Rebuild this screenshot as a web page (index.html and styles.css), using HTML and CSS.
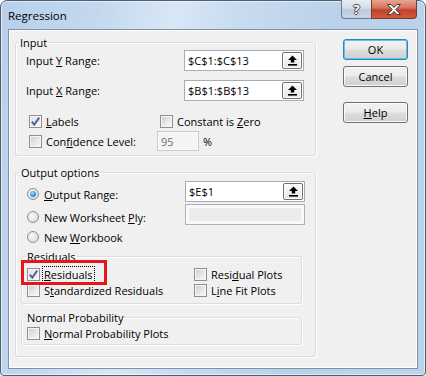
FILE: index.html
```html
<!DOCTYPE html>
<html lang="en">
<head>
<meta charset="UTF-8">
<title>Regression</title>
<link rel="stylesheet" href="styles.css">
</head>
<body>
<div class="window">
<div class="titlebar">
<span class="title">Regression</span>
<div class="caption">
<span class="cap-btn help">?</span>
<span class="cap-btn close">
<svg width="16" height="11" viewBox="0 0 16 11"><path d="M1.5 0.5h3.5l3 3 3-3h3.5l-4.7 5 4.7 5h-3.5l-3-3-3 3h-3.5l4.7-5z" fill="#fff" stroke="#3a3a3a" stroke-width="1" stroke-linejoin="round"/></svg>
</span>
</div>
</div>

<div class="client">
<div class="groups">

<fieldset class="group input-group">
<legend>Input</legend>
<div class="range-row">
<span class="range-label">Input <u>Y</u> Range:</span>
<div class="refedit"><span class="val">$C$1:$C$13</span><span class="ref-btn"><svg width="11" height="11" viewBox="0 0 11 11"><path d="M5.5 0.5L10 5H7.2V7.5H3.8V5H1z" fill="#000"/><rect x="1" y="9" width="9" height="1.6" fill="#000"/></svg></span></div>
</div>
<div class="range-row second">
<span class="range-label">Input <u>X</u> Range:</span>
<div class="refedit"><span class="val">$B$1:$B$13</span><span class="ref-btn"><svg width="11" height="11" viewBox="0 0 11 11"><path d="M5.5 0.5L10 5H7.2V7.5H3.8V5H1z" fill="#000"/><rect x="1" y="9" width="9" height="1.6" fill="#000"/></svg></span></div>
</div>
<div class="opt-grid">
<label class="chk"><span class="box on"><svg width="11" height="11" viewBox="0 0 11 11"><path d="M1.8 5.6L4.3 8.6L9.2 1.6" fill="none" stroke="#4f6596" stroke-width="2"/></svg></span><span><u>L</u>abels</span></label>
<label class="chk zero"><span class="box"></span><span>Constant is <u>Z</u>ero</span></label>
<label class="chk"><span class="box"></span><span>Con<u>f</u>idence Level:</span></label>
<div class="conf"><span class="edit disabled">95</span><span class="pct">%</span></div>
</div>
</fieldset>

<fieldset class="group output-group">
<legend>Output options</legend>
<div class="range-row out-first">
<label class="rad"><span class="dot on"></span><span><u>O</u>utput Range:</span></label>
<div class="refedit"><span class="val">$E$1</span><span class="ref-btn"><svg width="11" height="11" viewBox="0 0 11 11"><path d="M5.5 0.5L10 5H7.2V7.5H3.8V5H1z" fill="#000"/><rect x="1" y="9" width="9" height="1.6" fill="#000"/></svg></span></div>
</div>
<div class="range-row out-second">
<label class="rad"><span class="dot"></span><span>New Worksheet <u>P</u>ly:</span></label>
<div class="edit blank"></div>
</div>
<div class="radio-row">
<label class="rad"><span class="dot"></span><span>New <u>W</u>orkbook</span></label>
</div>

<fieldset class="group sub residuals">
<legend>Residuals</legend>
<div class="res-grid">
<label class="chk marked"><span class="box on"><svg width="11" height="11" viewBox="0 0 11 11"><path d="M1.8 5.6L4.3 8.6L9.2 1.6" fill="none" stroke="#4f6596" stroke-width="2"/></svg></span><span class="focus"><u>R</u>esiduals</span><span class="highlight"></span></label>
<label class="chk"><span class="box"></span><span>Resi<u>d</u>ual Plots</span></label>
<label class="chk"><span class="box"></span><span>S<u>t</u>andardized Residuals</span></label>
<label class="chk"><span class="box"></span><span>L<u>i</u>ne Fit Plots</span></label>
</div>
</fieldset>

<fieldset class="group sub normal">
<legend>Normal Probability</legend>
<div class="res-grid">
<label class="chk"><span class="box"></span><span><u>N</u>ormal Probability Plots</span></label>
</div>
</fieldset>
</fieldset>

</div>

<div class="buttons">
<button class="btn default">OK</button>
<button class="btn cancel">Cancel</button>
<button class="btn help-btn"><u>H</u>elp</button>
</div>
</div>
</div>
</body>
</html>
```

FILE: styles.css
```css
body {
margin: 0;
font-family: 'Open Sans', 'Noto Sans', sans-serif;
font-size: 11px;
color: #000;
background: #fff;
}
u {
text-decoration: underline;
text-underline-offset: 1px;
}
.window {
width: 426px;
height: 376px;
box-sizing: border-box;
border: 1px solid #4f5f72;
border-radius: 7px 7px 4px 4px;
padding: 0 7px 6px 7px;
background: linear-gradient(100deg, #b8d0ea 0%, #c3d8ee 20%, #d9e7f6 36%, #c9dcf0 48%, #b9d1ea 70%, #bcd3eb 100%);
box-shadow: inset 0 0 0 1px rgba(255,255,255,0.55);
}
.titlebar {
height: 28px;
display: flex;
justify-content: space-between;
align-items: flex-start;
}
.title {
font-size: 11.5px;
line-height: 15px;
padding-top: 7px;
}
.caption {
display: flex;
margin-top: -1px;
margin-right: 1px;
}
.cap-btn {
height: 19px;
display: flex;
align-items: center;
justify-content: center;
box-sizing: border-box;
border: 1px solid #6a7a8e;
border-top: none;
}
.help {
width: 30px;
border-radius: 0 0 0 4px;
background: linear-gradient(#e6ecf3 0%, #d3dde9 45%, #bccadb 55%, #c9d6e5 100%);
color: #fff;
font-weight: bold;
font-size: 13px;
text-shadow: 1px 0 0 #444, -1px 0 0 #444, 0 1px 0 #444, 0 -1px 0 #444;
border-right: none;
}
.close {
width: 46px;
border-radius: 0 0 4px 0;
background: linear-gradient(#e8a594 0%, #d6715b 45%, #c2412a 55%, #d35a3e 100%);
border-color: #7a3a30;
}
.client {
height: 340px;
box-sizing: border-box;
border: 1px solid #7d92aa;
background: #f0f0f0;
box-shadow: inset 0 0 0 1px #fff;
display: flex;
padding: 5px 0 0 6px;
}
.groups {
width: 301px;
}
.group {
margin: 0;
padding: 0;
min-width: 0;
border: 1px solid #d5dfe5;
border-radius: 3px;
box-shadow: inset 1px 1px 0 #fff, 1px 1px 0 #fff;
}
.group legend {
padding: 0 1px;
margin-left: -1px;
line-height: 15px;
}
.input-group {
padding: 0 11px 4px 10px;
}
.input-group legend {
margin-left: -7px;
}
.range-row {
display: flex;
justify-content: space-between;
align-items: center;
height: 21px;
}
.range-row.second {
margin-top: 9px;
}
.refedit, .edit {
width: 120px;
height: 21px;
box-sizing: border-box;
border: 1px solid #a8acb3;
background: #fff;
display: flex;
align-items: center;
justify-content: space-between;
}
.refedit .val {
padding-left: 3px;
}
.ref-btn {
width: 20px;
height: 17px;
box-sizing: border-box;
margin-right: 1px;
border: 1px solid #6f6f6f;
border-radius: 2px;
background: linear-gradient(#fdfdfd, #e4e4e4);
box-shadow: inset 0 0 0 1px #fff;
display: flex;
align-items: center;
justify-content: center;
}
.opt-grid {
display: grid;
grid-template-columns: 128px auto;
grid-auto-rows: 20px;
margin-top: 10px;
padding-left: 3px;
}
.chk, .rad {
display: flex;
align-items: center;
gap: 4px;
white-space: nowrap;
}
.box {
width: 13px;
height: 13px;
box-sizing: border-box;
border: 1px solid #8e8f8f;
background: linear-gradient(135deg, #c9ccd1 0%, #e9eaeb 60%, #f8f8f8 100%);
box-shadow: inset 0 0 0 1px #f6f6f6;
display: flex;
align-items: center;
justify-content: center;
flex: none;
}
.box.on {
background: linear-gradient(135deg, #dfe2e6 0%, #f4f4f5 100%);
}
.zero {
padding-left: 3px;
}
.conf {
display: flex;
align-items: center;
gap: 4px;
}
.edit.disabled {
width: 42px;
height: 20px;
border-color: #c9c9c9;
background: #f4f4f4;
box-shadow: inset 0 0 0 1px #fbfbfb;
color: #6d6d6d;
padding-left: 3px;
justify-content: flex-start;
}
.output-group {
margin-top: 9px;
padding: 0 10px 11px 5px;
}
.output-group .range-row {
padding-left: 6px;
}
.out-first {
margin-top: 1px;
}
.out-second {
margin-top: 2px;
}
.out-first .rad, .out-second .rad {
padding-top: 5px;
}
.edit.blank {
height: 21px;
border-color: #adb1b7;
background: #ececec;
box-shadow: inset 0 0 0 3px #f9f9f9;
}
.radio-row {
height: 20px;
margin-top: 2px;
padding-left: 6px;
display: flex;
align-items: center;
}
.dot {
width: 12px;
height: 12px;
box-sizing: border-box;
border-radius: 50%;
border: 1px solid #8f8f8f;
background: radial-gradient(circle at 40% 40%, #fafafa 0%, #e2e2e2 60%, #cfcfcf 100%);
display: flex;
align-items: center;
justify-content: center;
flex: none;
margin-right: 1px;
}
.dot.on::after {
content: "";
width: 6px;
height: 6px;
border-radius: 50%;
background: radial-gradient(circle at 40% 35%, #9be0ff 0%, #3d95d6 55%, #1c5d99 100%);
}
.sub {
margin-right: 3px;
padding: 0 0 5px 5px;
}
.residuals {
margin-top: 2px;
}
.res-grid {
display: grid;
grid-template-columns: 167px auto;
grid-auto-rows: 16px;
margin-top: 2px;
}
.normal {
margin-top: 6px;
padding-bottom: 3px;
}
.normal .res-grid {
margin-top: 0;
}
.marked {
position: relative;
}
.focus {
outline: 1px dotted #000;
outline-offset: 0;
padding: 0 1px;
margin-left: -1px;
}
.highlight {
position: absolute;
left: -6px;
top: -6px;
width: 86px;
height: 25px;
box-sizing: border-box;
border: 3px solid #e8141c;
}
.buttons {
display: flex;
flex-direction: column;
margin-left: 27px;
width: 65px;
}
.btn {
font-family: inherit;
font-size: 11px;
height: 21px;
padding: 0;
box-sizing: border-box;
border: 1px solid #707070;
border-radius: 3px;
background: linear-gradient(#f2f2f2 0%, #ebebeb 48%, #dddddd 52%, #cfcfcf 100%);
box-shadow: inset 0 0 0 1px #fafafa;
color: #000;
}
.btn.default {
margin-top: 4px;
border-color: #3c7fb1;
box-shadow: inset 0 0 0 1px #52c8f4;
}
.btn.cancel {
margin-top: 6px;
}
.btn.help-btn {
margin-top: 15px;
}
```
